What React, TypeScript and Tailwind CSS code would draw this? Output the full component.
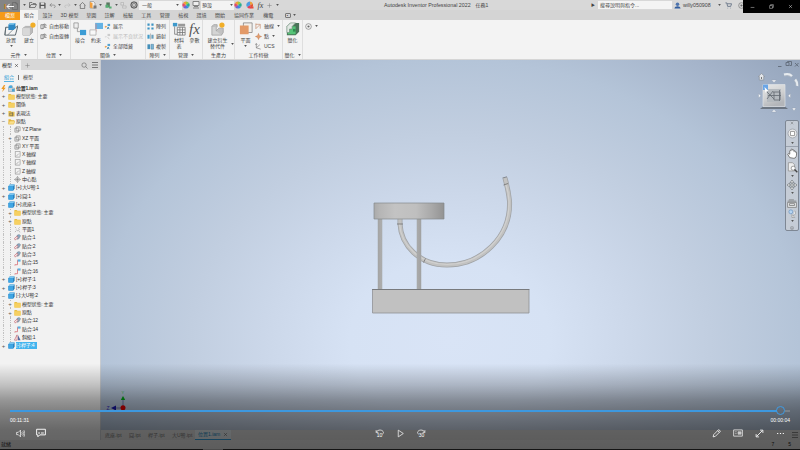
import React from "react";

type Kind = string;

/* Small pictograms, all drawn on a 16 x 16 grid */
function Ico({ k, s = 8, className = "" }: { k: Kind; s?: number; className?: string }) {
  const body: Record<string, React.ReactNode> = {
    folder: <><path d="M1 2h5l2 2h7v11H1z" fill="#e9bd40" /><path d="M1 5h14v10H1z" fill="#f6d062" /></>,
    folderOpen: <><path d="M1 3h5l2 2h6v3H4l-3 6z" fill="#e9b93a" /><path d="M4 7h12l-3 7H1z" fill="#fae08b" stroke="#dba72d" /></>,
    views: <><path d="M1 2h5l2 2h7v11H1z" fill="#e5bd4b" /><path d="M4 7h7v6H4zM10 5v9" fill="none" stroke="#776f58" strokeWidth="1.5" /></>,
    part: <><path d="M1 5l3-4h11v10l-3 4H1z" fill="#2079b8" /><path d="M1 5l3-4h11l-3 4z" fill="#7cc8f2" /><path d="M1 5h11v10H1z" fill="#3fa6e4" /></>,
    asm: <><path d="M1 5l3-3h6v5h5v8H1z" fill="#c8d3da" stroke="#66808e" /><path d="M2 3l2-2h5v6H2z" fill="#45a9df" /><path d="M9 9h6v6H9z" fill="#4ba4d2" /></>,
    plane: <path d="M2 5h8v9H2zM5 2h9v9h-4M5 2v9h5" fill="#eee" stroke="#777" strokeWidth="1.3" />,
    axis: <path d="M3 2v12h11M2 1h12v12M5 12l6-6" fill="none" stroke="#858585" strokeWidth="1.3" />,
    point: <path d="M8 1l2.5 4.5L15 8l-4.5 2.5L8 15l-2.500-4.500L1 8l4.500-2.500z M8 4v8M4 8h8" fill="#f1f1f1" stroke="#777" strokeWidth="1.4" />,
    wplane: <path d="M2 2l3 3M13 3l-3 3M5 8l3 3 5-3M2 14l3-3M11 12l3 2" fill="none" stroke="#999" strokeWidth="1.5" />,
    mate: <><path d="M7 3l5-2 3 3-4 7-4 1z" fill="#8aa8c0" stroke="#68798c" /><path d="M1 10l6-5 2 3-6 6z" fill="#f4e9e9" stroke="#c35c64" strokeWidth="1.4" /></>,
    flush: <><path d="M8 1h7v5H8z" fill="#5cafe0" /><path d="M8 3v10H2v2" fill="none" stroke="#d26068" strokeWidth="1.6" /></>,
    angle: <><path d="M7 2L1 14h6z" fill="#fff" stroke="#bd5965" strokeWidth="1.5" /><path d="M9 2l6 12H9z" fill="#566a9c" /></>,
    bolt: <path d="M9 0L3 9h4l-2 7 8-10H9l3-6z" fill="#f09a22" />,
    place: <><path d="M2 6h12l2-2-3 11H1z" fill="#f4f4f4" stroke="#59656c" strokeWidth="1.1" /><path d="M2 6l-1 9M4 15l10-10" stroke="#59656c" strokeWidth=".8" /><path d="M5 3l2-2h6v6l-2 2H5z" fill="#2e88c4" /><path d="M5 3l2-2h6l-2 2z" fill="#7cc3ea" /></>,
    create: <><path d="M1 7l3-2h8v7l-3 3H1z" fill="#bbb" stroke="#9a9a9a" strokeWidth=".7" /><path d="M1 7h8v8H1z" fill="#d8d8d8" /><circle cx="12.500" cy="3.500" r="3" fill="#f1ae28" /></>,
    derive: <><path d="M1 5h5v5h6v5H1z" fill="#d4d4d4" stroke="#999" strokeWidth=".8" /><path d="M6 10l3-3h5v5l-2 3M1 5l2-2h4v3" fill="#c2c2c2" stroke="#999" strokeWidth=".8" /><circle cx="12.500" cy="3.500" r="3" fill="#f1ae28" /></>,
    joint: <><path d="M1 1h5v6H1zM5 7v4h5" fill="#eee" stroke="#888" strokeWidth=".8" /><path d="M8 9h7v6H8z" fill="#3d9dd5" /></>,
    constrain: <><path d="M7 1h9v7H7z" fill="#64b2e4" /><path d="M8 2v9H1" fill="none" stroke="#df8077" strokeWidth=".8" /><path d="M1 9h7v6H1z" fill="#f8f8f8" stroke="#999" strokeWidth=".7" /></>,
    free: <path d="M2 4h5v9H2zM7 4l3-2v8l-3 3M12 2l2 3-2 3M11 10h4" fill="none" stroke="#555" strokeWidth="1.4" />,
    show: <><path d="M1 9l3-3 3 2-3 3z" fill="#ee9c43" /><path d="M8 2h6v5H8z" fill="#55a3d1" /><path d="M8 9l4 5M11 9l-4 5" stroke="#3d87af" strokeWidth="2" /></>,
    showDim: <><path d="M1 9l3-3 3 2-3 3z" fill="#ddd" /><path d="M8 2h6v5H8z" fill="#ccc" /><path d="M8 9l4 5" stroke="#ccc" strokeWidth="2" /></>,
    pattern: <path d="M1 1h5v5H1zM10 1h5v5h-5zM1 10h5v5H1zM10 10h5v5h-5z" fill="#3e94c3" />,
    mirror: <><path d="M1 4h5v9H1z" fill="#439bc9" /><path d="M8 1v14" stroke="#777" /><path d="M10 4h5v9h-5z" fill="#6b9fbb" /></>,
    copy: <><path d="M1 3h6v11H1z" fill="#448fb9" /><path d="M9 3h6v11H9z" fill="#7bb4d4" stroke="#397597" /></>,
    bom: <><path d="M1 1h5v4H1z" fill="#3d99cc" /><path d="M7 2h8v3H7z" fill="#999" /><path d="M3 5v9h3M6 6h9v9H6zM9 6v9M12 6v9M6 9h9M6 12h9" fill="none" stroke="#777" strokeWidth=".9" /></>,
    work: <><path d="M5 1h10v11H5z" fill="#f4efea" stroke="#777" strokeWidth=".8" /><path d="M1 4h10v10H1z" fill="#e39a68" /></>,
    waxis: <path d="M2 3h10v10M2 1v12l9-9" fill="none" stroke="#be7951" strokeWidth="1.3" />,
    wpoint: <path d="M8 1l2 5 5 2-5 2-2 5-2-5-5-2 5-2z" fill="#e49e6d" stroke="#bd744a" />,
    ucs: <path d="M3 2v9l10 3M3 11l8-7M1 4l2-3 2 3" fill="none" stroke="#666" strokeWidth="1.3" />,
    green: <><path d="M1 5l4-4h10v10l-4 4H1z" fill="#4a7459" /><path d="M2 5h9v9H2z" fill="#54c477" /><path d="M5 1h6l-4 4v3H4v4H1V5z" fill="#e2e8e4" stroke="#6a8a75" strokeWidth=".7" /><path d="M8 8h3v3H8z" fill="#2d8f4f" /></>,
    file: <path d="M3 1h7l3 3v11H3zM10 1v3h3" fill="none" stroke="#555" strokeWidth="1.400" />,
    open: <path d="M1 13V3h5l2 2h5v2M1 13l3-6h11l-3 6z" fill="none" stroke="#555" strokeWidth="1.400" />,
    save: <><path d="M1 1h12l2 2v12H1z" fill="#555" /><path d="M4 1h8v5H4zM4 9h8v6H4z" fill="#ddd" /></>,
    undo: <path d="M6 3L2 7l4 4M2 7h8c6 0 5 6 1 6" fill="none" stroke="#777" strokeWidth="1.500" />,
    redo: <path d="M10 3l4 4-4 4M14 7H6c-6 0-5 6-1 6" fill="none" stroke="#bbb" strokeWidth="1.500" />,
    home: <path d="M1 8l7-7 7 7M3 7v8h10V7" fill="none" stroke="#555" strokeWidth="1.500" />,
    doc: <><path d="M2 1h7l3 3v10H2z" fill="#eee" stroke="#777" /><path d="M2 2l5 2v11l-5-2z" fill="#f4a03c" /><path d="M9 9h6v6H9z" fill="#777" /></>,
    docGreen: <><path d="M3 1h8v11H3z" fill="#5a765f" /><path d="M1 6h7v7H1zM9 10h6v5H9z" fill="#55ae73" /></>,
    gray: <path d="M2 1h6v6H2zM6 9h8v5H6z" fill="#ddd" stroke="#999" />,
    globe: <><circle cx="8" cy="8" r="6.500" fill="#777" stroke="#444" strokeWidth="1.300" /><path d="M8 2v12M2 8h12M4 4l8 8M12 4l-8 8" stroke="#e1e1e1" /></>,
    wheel: <><path d="M8 8V1a7 7 0 0 1 6 3z" fill="#9dca3e" /><path d="M8 8l6-4a7 7 0 0 1 0 8z" fill="#26ae90" /><path d="M8 8l6 4a7 7 0 0 1-6 3z" fill="#368ce0" /><path d="M8 8v7a7 7 0 0 1-6-3z" fill="#7760d0" /><path d="M8 8l-6 4a7 7 0 0 1 0-8z" fill="#e44b68" /><path d="M8 8L2 4a7 7 0 0 1 6-3z" fill="#f29d35" /></>,
    wheelEdit: <><path d="M8 8V1a7 7 0 0 1 6 5z" fill="#e9a23e" /><path d="M8 8l6-2a7 7 0 0 1-3 8z" fill="#e4552f" /><path d="M8 8l3 6a7 7 0 0 1-9-2z" fill="#e2405c" /><path d="M8 8l-6 4a7 7 0 0 1 6-11z" fill="#4c9de0" /><path d="M9 11h6v4H9z" fill="#e84b3c" /></>,
    mat: <path d="M2 1h12v8H2zM4 11h8M2 14h12" fill="#eee" stroke="#666" strokeWidth="1.500" />,
    plus: <path d="M8 1v14M1 8h14" stroke="#777" strokeWidth="1.500" />,
    search: <><circle cx="7" cy="7" r="5" fill="none" stroke="#666" strokeWidth="1.400" /><path d="M10.500 10.500L15 15" stroke="#666" strokeWidth="1.500" /></>,
    menu: <path d="M2 3h12M2 8h12M2 13h12" stroke="currentColor" strokeWidth="1.700" />,
    x: <path d="M3 3l10 10M13 3L3 13" stroke="currentColor" strokeWidth="1.500" />,
    user: <><circle cx="8" cy="5" r="4" fill="#4e74ae" /><path d="M1 15c1-7 13-7 14 0z" fill="#315c9e" /></>,
    cart: <path d="M1 2h3l2 8h7l2-6H5M6 14h1M12 14h1" fill="none" stroke="#53637a" strokeWidth="1.700" />,
    target: <><circle cx="8" cy="8" r="6.500" fill="none" stroke="#666" strokeWidth="1.300" /><circle cx="8" cy="8" r="2.500" fill="#666" /></>,
    restore: <path d="M2 5h9v9H2zM5 5V2h9v9h-3" fill="none" stroke="currentColor" strokeWidth="1.500" />,
    min: <path d="M2 11h12" stroke="currentColor" strokeWidth="1.500" />,
    sound: <><path d="M1 6h3l4-4v12l-4-4H1z" fill="none" stroke="#fff" strokeWidth="1.200" /><path d="M10 6q2 2 0 4M12 4q3.500 4 0 8M14 2q4 6 0 12" fill="none" stroke="#fff" strokeWidth="1.100" /></>,
    caption: <path d="M1 2h14v9H6l-3 3v-3H1zM3.500 8h3M8 8h4.500" fill="none" stroke="#fff" strokeWidth="1.500" />,
    back: <path d="M2 2v4h4M2 6c3-6 12-5 13 0 0 2-1 3-2 3" fill="none" stroke="#eee" strokeWidth="1.400" />,
    fwd: <path d="M14 2v4h-4M14 6C11 0 2 1 1 6c0 2 1 3 2 3" fill="none" stroke="#eee" strokeWidth="1.400" />,
    play: <path d="M4 2l9 6-9 6z" fill="none" stroke="#eee" strokeWidth="1.400" />,
    pen: <path d="M2 14l1-4 9-9 3 3-9 9zM10 3l3 3" fill="none" stroke="#fff" strokeWidth="1.400" />,
    pip: <><path d="M1 3h14v10H1z" fill="none" stroke="#ddd" strokeWidth="1.400" /><path d="M8 6h5v4H8zM3 6h3M3 9h3" fill="#ccc" stroke="#ccc" /></>,
    expand: <path d="M3 13L13 3M9 2h5v5M2 9v5h5" fill="none" stroke="#fff" strokeWidth="1.500" />,
    dots: <path d="M2 7h2v2H2zM7 7h2v2H7zM12 7h2v2h-2z" fill="#fff" />,
    orbit: <><circle cx="8" cy="8" r="6.500" fill="#eee" stroke="#9aa0a8" strokeWidth="1.300" /><path d="M5 5h6v6H5z" fill="#fff" stroke="#888" strokeWidth="1.200" /></>,
    hand: <path d="M4 14L1 9q1-2 3 0V4q1-1 2 0V2q1-1 2 0v1q1-1 2 0v2q2-2 2 0v1q2-1 2 1c0 5-1 8-4 8z" fill="#fff" stroke="#666" strokeWidth="1.200" />,
    zoom: <><path d="M2 1h6l3 3v9H2z" fill="#eee" stroke="#888" /><circle cx="9" cy="9" r="3" fill="#fff" stroke="#777" /><path d="M11 11l4 4" stroke="#444" strokeWidth="2" /></>,
    move: <><path d="M8 0l3 4H9v3h3V5l4 3-4 3V9H9v3h2l-3 4-3-4h2V9H4v2L0 8l4-3v2h3V4H5z" fill="#e9e9e9" stroke="#6f747a" strokeWidth="1.1" /></>,
    look: <path d="M1 7h14v8H1zM1 5h14M3 3h8M4 9h8v3H4z" fill="#e4e6e8" stroke="#777" strokeWidth="1.2" />,
    rotate: <><circle cx="5" cy="5" r="3.500" fill="#b8d5f1" stroke="#5787b9" /><path d="M12 3q4 6-3 9l-2-2v5h5l-2-2" fill="#eee" stroke="#888" /></>,
  };
  return <svg viewBox="0 0 16 16" width={s} height={s} className={`shrink-0 ${className}`}>{body[k]}</svg>;
}

const Caret = ({ className = "" }: { className?: string }) => (
  <svg viewBox="0 0 4 3" className={`h-[2px] w-[3px] shrink-0 ${className}`}><path d="M0 0h4L2 3z" fill="#555" /></svg>
);

function Big({ icon, label, w, caret, s = 14 }: { icon: Kind; label: string[]; w: string; caret?: boolean; s?: number }) {
  return (
    <div className={`flex shrink-0 flex-col items-center pt-[2px] ${w}`}>
      {icon === "fx" ? <span className="h-[14px] font-['Liberation_Serif'] text-[15px] leading-[14px] text-[#555] italic">fx</span> : <Ico k={icon} s={s} />}
      <div className="mt-px flex flex-col items-center leading-[6px]">
        {label.map((t) => <span key={t}>{t}</span>)}
      </div>
      {caret && <Caret className="mt-[2px]" />}
    </div>
  );
}

function Small({ icon, label, dim, caret }: { icon: Kind; label: string; dim?: boolean; caret?: boolean }) {
  return (
    <div className={`flex h-[10px] items-center gap-[2px] ${dim ? "text-[#bbb]" : ""}`}>
      <Ico k={icon} s={7} /><span>{label}</span>{caret && <Caret className="ml-px" />}
    </div>
  );
}

function Group({ w, title, caret, children }: { w: string; title: string; caret?: boolean; children: React.ReactNode }) {
  return (
    <div className={`flex h-full shrink-0 flex-col border-r border-[#dedede] ${w}`}>
      <div className="flex h-[31px] px-px">{children}</div>
      <div className="flex h-[8px] items-center justify-center gap-[3px]"><span>{title}</span>{caret && <Caret />}</div>
    </div>
  );
}

const tabs: [string, string][] = [
  ["設計", "w-[19px]"], ["3D 模型", "w-[25px]"], ["草圖", "w-[18.4px]"], ["註解", "w-[18.4px]"], ["檢驗", "w-[18.4px]"], ["工具", "w-[18.4px]"], ["管理", "w-[18.4px]"],
  ["檢視", "w-[18.4px]"], ["環境", "w-[18.4px]"], ["開始", "w-[18.4px]"], ["協同作業", "w-[30px]"], ["機電", "w-[18.4px]"],
];

function TitleBar() {
  return (
    <div className="flex h-[10px] shrink-0 items-center bg-[#d8d8d8]">
      <div className="relative flex h-[12px] w-5 shrink-0 items-center self-start bg-[#858585] pl-1">
        <span className="text-[8px] leading-[9px] font-bold text-[#cf861e]">I</span>
        <Ico k="file" s={8} className="ml-[5px] opacity-60" />
        <svg viewBox="0 0 10 8" className="absolute top-[3px] left-[6px] h-[7px] w-[9px]"><path d="M9 4H1M4 1L1 4l3 3" fill="none" stroke="#fff" strokeWidth="1.100" /></svg>
      </div>
      <div className="flex w-[119px] shrink-0 items-center justify-between pr-px pl-[3px]">
        <Caret /><Ico k="open" s={8} /><Ico k="save" s={7} /><Ico k="undo" s={7} /><Caret /><Ico k="redo" s={7} /><Caret /><Ico k="home" s={7} /><Ico k="doc" s={8} /><Caret /><Ico k="docGreen" s={7} /><Caret /><Ico k="gray" s={7} /><Ico k="globe" s={8} />
      </div>
      <div className="flex h-[9px] w-[43px] shrink-0 items-center justify-between bg-[#f3f3f3] px-[3px]"><span>一般</span><Caret /></div>
      <div className="flex w-[19px] shrink-0 items-center justify-between pr-px"><Ico k="wheel" s={8} /><Ico k="mat" s={8} /></div>
      <div className="flex h-[9px] w-[33px] shrink-0 items-center justify-between bg-[#f3f3f3] px-px"><span>預設</span><Caret /></div>
      <div className="flex w-[45px] shrink-0 items-center justify-between"><Ico k="wheel" s={8} /><Ico k="wheelEdit" s={8} /><i className="font-['Liberation_Serif'] text-[8px]">fx</i><Ico k="plus" s={5} /><Caret /></div>
      <div className="ml-[105px] flex w-[207px] shrink-0 gap-[5px]"><span className="text-[5.300px]">Autodesk Inventor Professional 2022</span><span>任務1</span></div>
      <span className="w-[7px] text-[4px]">▶</span>
      <div className="h-[8px] w-[74px] shrink-0 bg-[#f4f4f4] px-[2px] leading-[8px]">搜尋說明與指令...</div>
      <Ico k="user" s={7} className="ml-[2px]" /><span className="ml-[2px] w-[35px] text-[5.300px]">willy050908</span><Caret />
      <Ico k="cart" s={7} className="ml-[4px]" /><Ico k="target" s={7} className="ml-[6px]" />
    </div>
  );
}

function Ribbon() {
  return (
    <div className="flex h-10 shrink-0 border-b border-[#d5d5d5] bg-[#f3f3f3]">
      <Group w="w-[38px]" title="元件" caret><Big icon="place" label={["放置"]} w="w-[20px]" caret /><Big icon="create" label={["建立"]} w="w-[16px]" /></Group>
      <Group w="w-[33px]" title="位置" caret><div className="pt-px pl-px"><Small icon="free" label="自由移動" /><Small icon="free" label="自由旋轉" /></div></Group>
      <Group w="w-[75px]" title="關係" caret>
        <Big icon="joint" label={["接合"]} w="w-[16px]" /><Big icon="constrain" label={["約束"]} w="w-[16px]" />
        <div className="pt-px"><Small icon="show" label="展示" /><Small icon="showDim" label="展示不良狀況" dim /><Small icon="show" label="全部隱藏" /></div>
      </Group>
      <Group w="w-[24px]" title="陣列" caret><div className="pt-px"><Small icon="pattern" label="陣列" /><Small icon="mirror" label="鏡射" /><Small icon="copy" label="複製" /></div></Group>
      <Group w="w-[33px]" title="管理" caret><Big icon="bom" label={["材料", "表"]} w="w-[16px]" /><Big icon="fx" label={["參數"]} w="w-[15px]" /></Group>
      <Group w="w-[32px]" title="生產力"><Big icon="derive" label={["建立衍生", "替代件"]} w="w-[27px]" /><Caret className="mt-[23px]" /></Group>
      <Group w="w-[48px]" title="工作特徵">
        <Big icon="work" label={["平面"]} w="w-[19px]" caret />
        <div className="pt-px"><Small icon="waxis" label="軸線" caret /><Small icon="wpoint" label="點" caret /><Small icon="ucs" label="UCS" /></div>
      </Group>
      <Group w="w-[20px]" title="簡化" caret><Big icon="green" label={["簡化"]} w="w-[17px]" /></Group>
      <div className="flex h-3 items-center gap-[3px] pl-[2px]"><Ico k="target" s={7} /><Caret /></div>
    </div>
  );
}

type Row = [depth: number, icon: Kind, label: string, toggle?: string];
const rows: Row[] = [
  [0, "asm", "位置1.iam", "root"], [0, "folder", "模型狀態: 主要", "+"], [0, "folder", "關係", "+"], [0, "views", "表現法", "+"], [0, "folderOpen", "原點", "-"],
  [1, "plane", "YZ Plane"], [1, "plane", "XZ 平面", "+"], [1, "plane", "XY 平面"], [1, "axis", "X 軸線"], [1, "axis", "Y 軸線"], [1, "axis", "Z 軸線"], [1, "point", "中心點"],
  [0, "part", "[+]:大U彎:1", "+"], [0, "part", "[+]:圓:1", "+"], [0, "part", "[+]:底座:1", "-"],
  [1, "folder", "模型狀態: 主要", "+"], [1, "folder", "原點", "+"], [1, "wplane", "平面1"], [1, "mate", "貼合:1"], [1, "mate", "貼合:2"], [1, "mate", "貼合:3"], [1, "flush", "貼合:15"], [1, "flush", "貼合:16"],
  [0, "part", "[+]:桿子:1", "+"], [0, "part", "[+]:桿子:3", "+"], [0, "part", "[-]:大U彎:2", "-"],
  [1, "folder", "模型狀態: 主要", "+"], [1, "folder", "原點", "+"], [1, "mate", "貼合:12"], [1, "flush", "貼合:14"], [1, "angle", "斜組:1"], [0, "part", "[-]:桿子:4", "sel"],
];

function Browser() {
  return (
    <aside className="flex w-[101px] shrink-0 flex-col border-r border-[#c9ccd0] bg-[#f2f2f2]">
      <div className="flex h-[10px] shrink-0 items-center bg-[#d8d8d8] text-[#444]">
        <div className="flex h-full w-[21px] items-center justify-between bg-[#f2f2f2] pr-[2px] pl-[2px] text-[#222]"><span>模型</span><Ico k="x" s={5} /></div>
        <Ico k="plus" s={5} className="ml-[4px]" />
        <Ico k="search" s={7} className="ml-auto" /><Ico k="menu" s={8} className="mr-px ml-[3px] text-[#666]" />
      </div>
      <div className="flex h-[14px] shrink-0 items-center gap-[4px] pt-px pl-[4px]"><span className="border-b border-[#59b4e3] leading-[7px] text-[#319fd6]">組合</span><span className="h-[5px] w-px bg-[#777]" /><span>模型</span></div>
      <div className="flex flex-col text-[5px] tracking-[-0.2px] text-[#333]">
        {rows.map(([d, icon, label, t], i) => (
          <div key={i} className="flex h-[8.320px] items-center">
            <div className="flex h-full w-[7px] shrink-0 items-center justify-center">
              {t === "root" ? <Ico k="bolt" s={7} /> : d ? <span className="h-full border-l border-dotted border-[#c2c2c2]" /> : <span className="text-[6px] leading-none text-[#555]">{t === "-" ? "−" : "+"}</span>}
            </div>
            {d === 1 && <div className="relative flex h-full w-[6px] shrink-0 items-center justify-center"><span className="h-full border-l border-dotted border-[#bbb]" />{t && <span className="absolute bg-[#f2f2f2] text-[6px] leading-none text-[#555]">+</span>}</div>}
            <Ico k={icon} s={7} className="ml-px" />
            <span className={`ml-px whitespace-nowrap leading-[7px] ${t === "sel" ? "w-[21px] bg-[#42b4ee] text-white" : t === "root" ? "font-bold" : ""}`}>{label}</span>
          </div>
        ))}
      </div>
    </aside>
  );
}

function Model() {
  return (
    <svg viewBox="101 60 699 370" className="absolute inset-0 h-[370px] w-[699px]">
      <defs>
        <linearGradient id="disc"><stop stopColor="#aaa" /><stop offset=".08" stopColor="#b5b5b5" /><stop offset=".3" stopColor="#c3c3c3" /><stop offset=".6" stopColor="#bfbfbf" /><stop offset=".82" stopColor="#a9a9a9" /><stop offset="1" stopColor="#939393" /></linearGradient>
        <linearGradient id="rod"><stop stopColor="#a4a4a4" /><stop offset=".3" stopColor="#c6c6c6" /><stop offset=".7" stopColor="#c0c0c0" /><stop offset="1" stopColor="#a2a2a2" /></linearGradient>
      </defs>
      <g fill="none">
        <path d="M400 219v5C401 245 419 265 447 265C481 265 511 237 509.500 201Q508.500 191 505 178" stroke="#a0a3a6" strokeWidth="5" />
        <path d="M400 219v5C401 245 419 265 447 265C481 265 511 237 509.500 201Q508.500 191 505 178" stroke="#c2c2c1" strokeWidth="3.500" />
        <path d="M399.500 224C401 244 419 264.500 447 264.500C480 264.500 510 237 509 201Q508.500 192 506 185" stroke="#d0d0cf" strokeWidth="1.200" />
      </g>
      <path d="M378 219h4v71h-4zM417 219h4v71h-4z" fill="url(#rod)" stroke="#a2a4a6" strokeWidth=".5" />
      <path d="M397 224h6M423.500 262.500l2-4M503.500 185l4.500-1.500M502.500 178l4.500-1.200" stroke="#666" strokeWidth=".7" />
      <path d="M374 203h70v16h-70z" fill="url(#disc)" stroke="#85898e" strokeWidth=".7" />
      <path d="M372.500 289.500h156.500v23.500H372.500z" fill="#c1c1c1" stroke="#909296" strokeWidth=".8" />
      <path d="M372 289.500h157.500" stroke="#6e7174" strokeWidth=".8" />
      <path d="M123 400v8H113" fill="none" stroke="#777fae" strokeWidth="1" /><path d="M120.800 400l2.200-4 2.200 4z" fill="#00a515" /><path d="M116 405.500v5l-5-2.500z" fill="#1717a8" /><circle cx="123" cy="407.700" r="2.500" fill="#e00000" />
      <text x="106.500" y="410" fill="#3232c4" fontSize="5">Z</text><text x="121.500" y="394" fill="#42c254" fontSize="4">Y</text>
    </svg>
  );
}

function ViewCube() {
  return (
    <svg viewBox="750 60 50 58" className="absolute top-0 right-0 h-[58px] w-[50px]">
      <defs><linearGradient id="cube" x2=".4" y2="1"><stop stopColor="#e6e7e8" /><stop offset=".6" stopColor="#cfd0d1" /><stop offset="1" stopColor="#b3b5b9" /></linearGradient></defs>
      <g fill="none" stroke="#667180" strokeWidth="1"><path d="M778 66.500h3.500M786 62.500h3v3h-3zM787.500 62v-.5h4v4h-2M795 63l3.500 3.500M798.500 63l-3.500 3.500" /></g>
      <path d="M784 75q5-1.500 8 1.500M795 79.500q2.500 3 2 6.500" fill="none" stroke="#aeb7c3" strokeWidth="3" /><path d="M784 74.500q5-1.500 8 1.500M795.300 79.500q2.500 3 2 6.500" fill="none" stroke="#e6ebf0" strokeWidth="2" />
      <path d="M761.500 73.500l3.200 3h-1v3.500h-4.400v-3.500h-1z" fill="#e2e5e9" stroke="#8b929b" strokeWidth=".7" /><path d="M761 77h1v2h-1z" fill="#777" />
      <path d="M763 106.500h22l3 2.500h-28z" fill="#5f6670" opacity=".8" /><path d="M763 84.500h22v22h-22z" fill="url(#cube)" stroke="#dfe2e5" strokeWidth=".7" />
      <path d="M767 89h14v13h-14z" fill="#b5babf" />
      <path d="M763 84.500h5v5.500h-5z" fill="#6aa5e6" /><path d="M764.500 87l4 4h-2l-1 2z" fill="#fff" />
      <path d="M767 92l7 7M773 91l-6 8M773 92h7M774 92v8h6v-8M768 95.500h13M779.500 90v11" fill="none" stroke="#646b72" strokeWidth=".8" />
      <g fill="#f3f5f8" stroke="#8d9aab" strokeWidth=".4"><path d="M771.500 80h5l-2.500 2.500zM771.500 112h5l-2.500-2.500zM758.500 93.500v4.500l2.500-2.200zM790.500 93.500v4.500l-2.500-2.200zM792 108h4l-2 3z" /></g>
    </svg>
  );
}

function NavBar() {
  return (
    <div className="absolute top-[60px] right-px flex h-[111px] w-[14px] flex-col items-center rounded-[2px] border border-[#7e8794] bg-[#c5ccd6]">
      <Ico k="x" s={4} className="text-[#555]" /><Ico k="orbit" s={11} className="mt-[3px]" /><Caret className="mt-[3px]" />
      <div className="mt-[2px] w-full border-t border-[#9aa2ae]" />
      <Ico k="hand" s={11} className="mt-px" /><Ico k="zoom" s={11} className="mt-[3px]" /><Caret className="mt-[2px]" />
      <Ico k="move" s={10} className="mt-[3px]" /><Caret className="mt-[2px]" />
      <Ico k="look" s={10} className="mt-[4px]" /><Ico k="rotate" s={9} className="mt-px" /><Caret className="mt-[2px]" />
      <Ico k="target" s={4} className="mt-[4px]" />
    </div>
  );
}

function PlayerControls() {
  return (
    <div className="absolute inset-x-0 bottom-0 flex h-[96px] flex-col bg-[linear-gradient(to_bottom,rgba(0,0,0,0)_10%,rgba(0,0,0,0.2)_32%,rgba(0,0,0,0.38)_48%,rgba(0,0,0,0.46)_58%,rgba(0,0,0,0.57)_79%,rgba(0,0,0,0.6)_100%)] pt-[52px] text-white">
      <div className="flex h-[9px] items-center px-[10px]">
        <div className="h-[2px] w-[768px] bg-[#3d98df]" />
        <div className="-ml-px h-[9px] w-[9px] rounded-full border-[1.5px] border-[#3f9ce4]" />
        <div className="h-[2px] w-[5px] bg-[#7a828a]" />
      </div>
      <div className="flex h-[10px] items-center justify-between px-[10px] text-[5px]"><span>00:11:31</span><span>00:00:04</span></div>
      <div className="flex h-[16px] items-center">
        <Ico k="sound" s={9} className="ml-[16px]" /><Ico k="caption" s={10} className="ml-[11px]" />
        <div className="ml-[329px] flex items-center gap-[12px]">
          <div className="relative flex h-[9px] w-[9px] justify-center"><Ico k="back" s={9} /><span className="absolute top-[3px] text-[5px] leading-[6px]">10</span></div>
          <Ico k="play" s={9} />
          <div className="relative flex h-[9px] w-[9px] justify-center"><Ico k="fwd" s={9} /><span className="absolute top-[3px] text-[5px] leading-[6px]">30</span></div>
        </div>
        <div className="ml-auto flex items-center gap-[12px] pr-[15px]"><Ico k="pen" s={9} /><Ico k="pip" s={10} /><Ico k="expand" s={9} /><Ico k="dots" s={9} /></div>
      </div>
    </div>
  );
}

export default function App() {
  return (
    <div className="relative flex h-[450px] w-[800px] flex-col overflow-hidden bg-[#f2f2f2] font-['Liberation_Sans','Noto_Sans_CJK_TC',sans-serif] text-[5px] leading-[7px] whitespace-nowrap text-[#444]">
      <TitleBar />
      <div className="flex h-[10px] shrink-0 items-center bg-[#d4d4d4]">
        <div className="flex h-full w-5 items-center justify-center bg-[#f69a17] pt-px text-white">檔案</div>
        <div className="flex h-full w-[18px] items-center justify-center bg-[#f3f3f3]">組合</div>
        <div className="flex items-center">
          {tabs.map(([t, w]) => <span key={t} className={`text-center ${w}`}>{t}</span>)}
        </div>
        <span className="ml-[7px] flex h-[5px] w-[6px] items-center justify-center rounded-[1px] border border-[#777] text-[4px]">▪</span><Caret className="ml-[2px]" />
      </div>
      <Ribbon />
      <div className="flex h-[380px] shrink-0">
        <Browser />
        <main className="relative flex min-w-0 flex-1 flex-col justify-end bg-[radial-gradient(ellipse_500px_400px_at_349px_280px,#d9e4f6_0%,#d6e2f4_20%,#ccd8ea_36%,#c1cee0_52%,#b4c4d8_70%,#a5b4ca_85%,#93a3ba_100%)]">
          <Model /><ViewCube /><NavBar />
          <div className="flex h-[10px] items-center bg-[#dfdfdf] pl-[4px] text-[#777]">
            <span className="w-[24px]">底座.ipt</span><span className="w-[19px]">圓.ipt</span><span className="w-[24px]">桿子.ipt</span><span className="w-[23px]">大U彎.ipt</span>
            <span className="flex h-full w-[36px] items-center justify-between border-b border-[#32a1e0] bg-[#e9f1f5] px-[3px] text-[#278bc3]">位置1.iam<Ico k="x" s={5} className="text-[#555]" /></span>
            <Ico k="menu" s={8} className="mr-px ml-auto" />
          </div>
        </main>
      </div>
      <footer className="flex h-[9px] shrink-0 items-center justify-between bg-[#e6e6e6] px-px text-[#222]"><span>就緒</span><span className="flex gap-[14px] pr-[8px]"><span>7</span><span>5</span></span></footer>
      <div className="flex h-px shrink-0 bg-[#333]"><span className="ml-[203px] w-[20px] bg-[#bbb]" /></div>
      <PlayerControls />
      <div className="absolute top-0 right-0 flex h-[13px] w-[57px] items-center justify-between bg-black px-[7px] text-[#ddd]"><Ico k="min" s={5} /><Ico k="restore" s={5} /><Ico k="x" s={5} /></div>
    </div>
  );
}
